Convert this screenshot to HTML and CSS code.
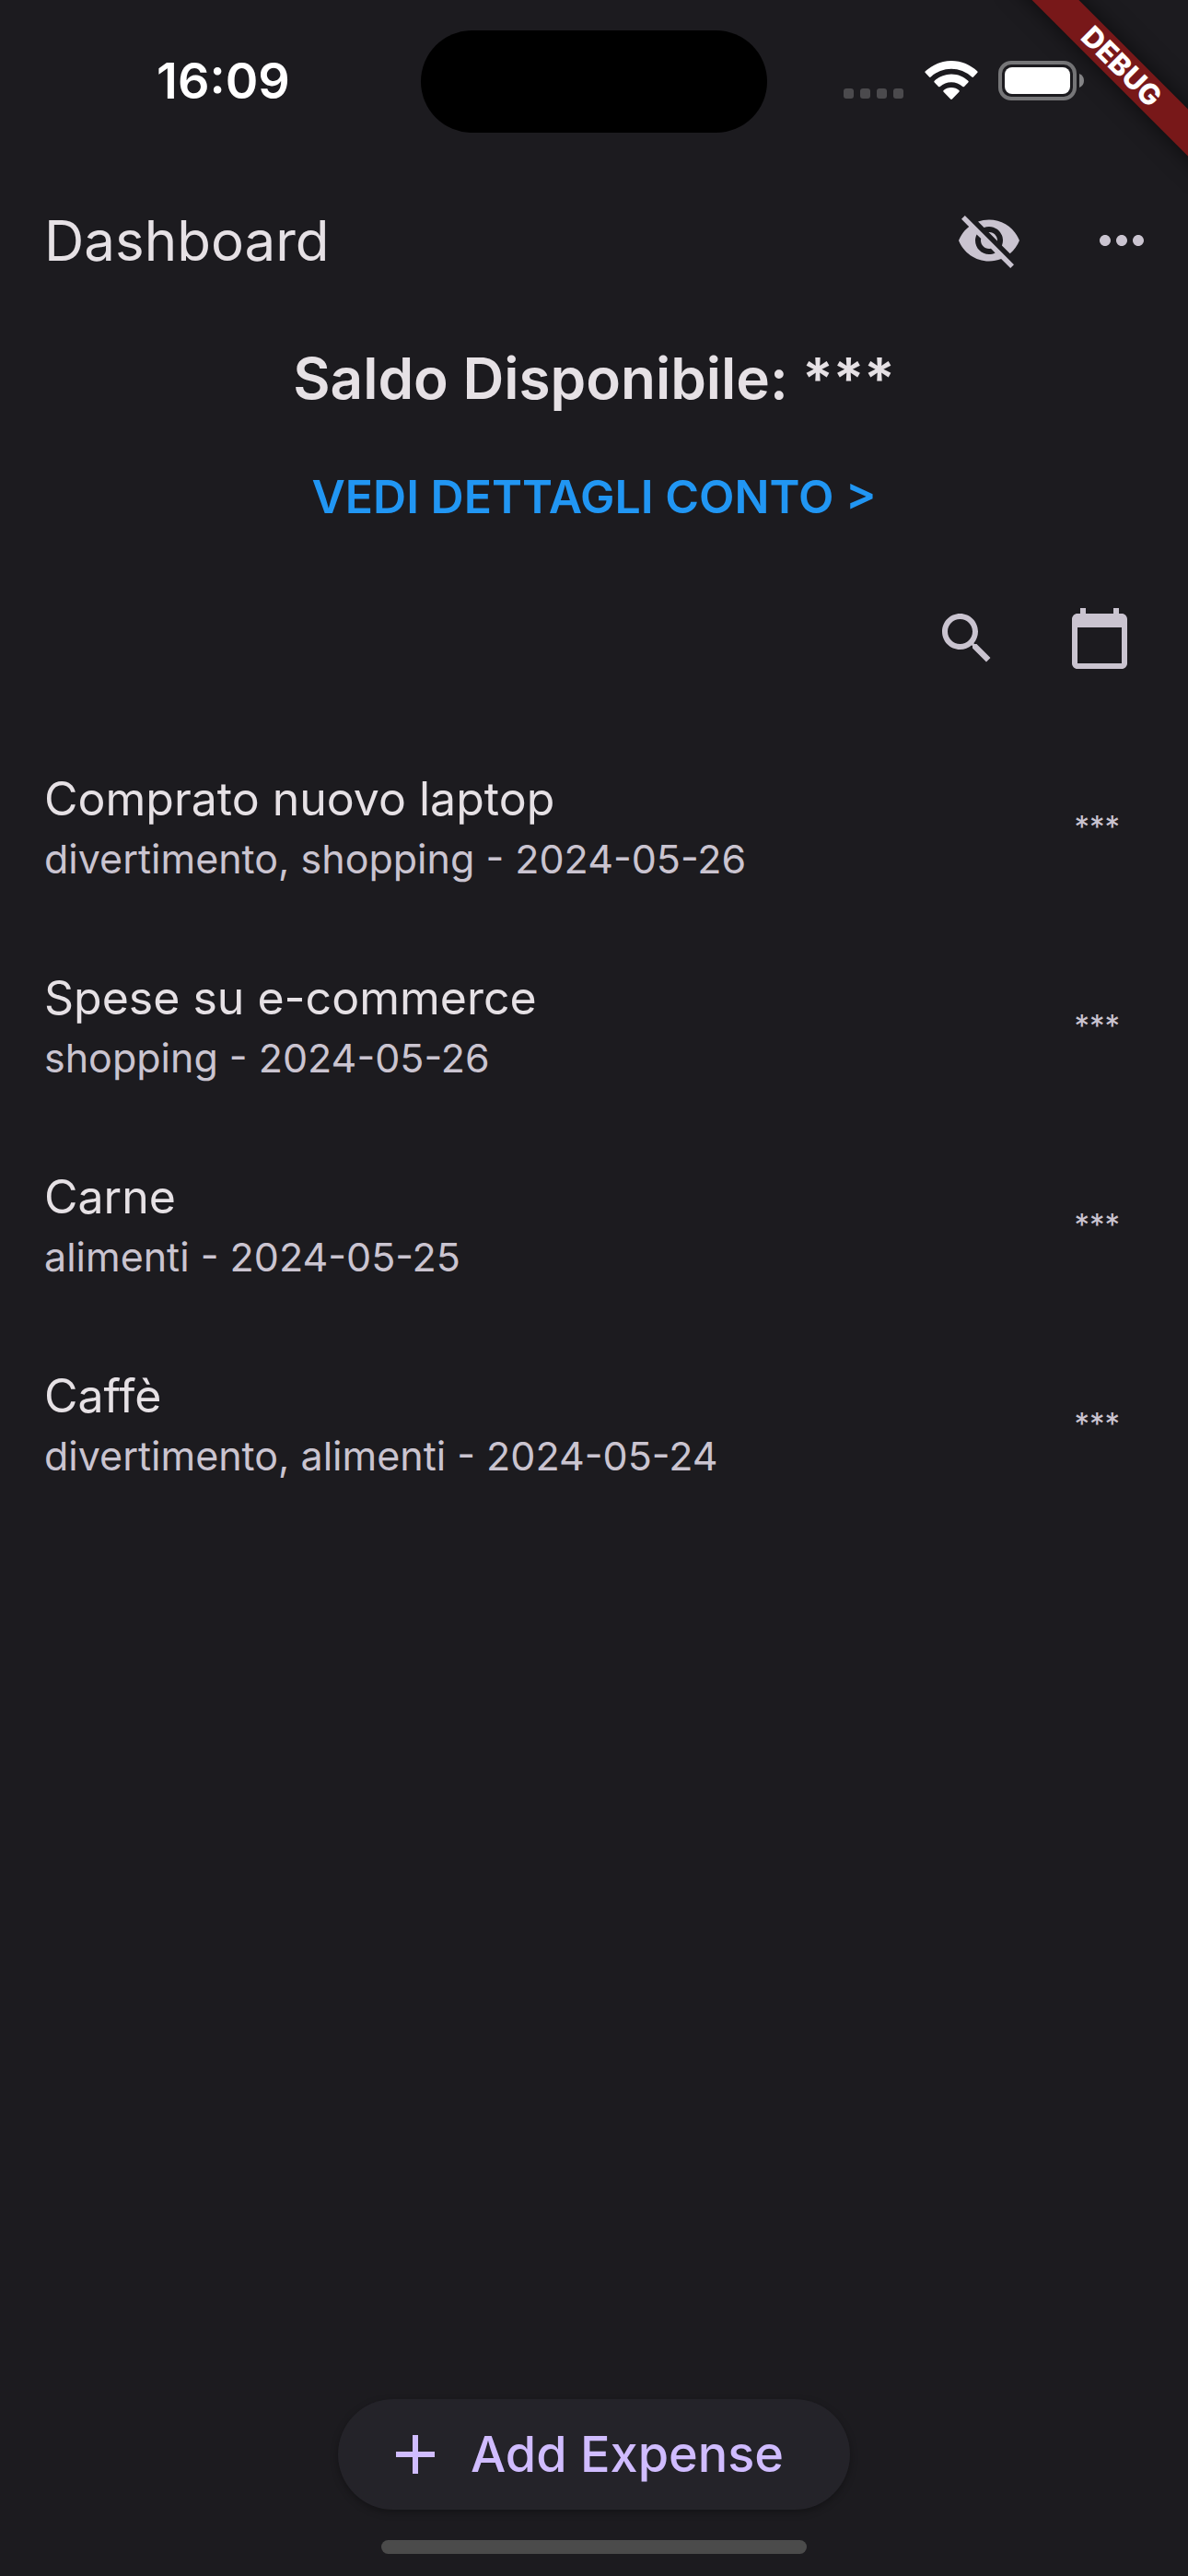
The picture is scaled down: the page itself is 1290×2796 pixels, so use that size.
FILE: index.html
```html
<!DOCTYPE html>
<html lang="it">
<head>
<meta charset="utf-8">
<meta name="viewport" content="width=device-width, initial-scale=1">
<title>Dashboard</title>
<link rel="stylesheet" href="styles.css">
</head>
<body>
<div class="screen">
  <div class="status-bar">
    <div class="status-side"><time class="clock">16:09</time></div>
    <div class="island"></div>
    <div class="status-side status-icons">
      <svg class="signal" viewBox="0 0 66 12" aria-hidden="true">
        <rect width="11" height="11" rx="3"/><rect x="18" width="11" height="11" rx="3"/><rect x="36" width="11" height="11" rx="3"/><rect x="54" width="11" height="11" rx="3"/>
      </svg>
      <svg class="wifi" viewBox="0 0 58 43" aria-hidden="true">
        <path d="M29 0C18 0 8 4.500 .8 11.300Q0 12.200 .8 13.100L5 17.500Q5.800 18.300 6.700 17.500A32.500 32.500 0 0 1 51.300 17.500Q52.200 18.300 53 17.500L57.200 13.100Q58 12.200 57.200 11.300C50 4.500 40 0 29 0Z"/>
        <path d="M29 14.500C21.800 14.500 15.500 17.300 10.700 21.700Q9.800 22.600 10.700 23.500L15 27.900Q15.800 28.700 16.700 27.900A18.500 18.500 0 0 1 41.300 27.900Q42.200 28.700 43 27.900L47.300 23.500Q48.200 22.600 47.300 21.700C42.500 17.300 36.200 14.500 29 14.500Z"/>
        <path d="M29 29C25.600 29 22.900 30.200 20.600 32Q19.700 32.900 20.600 33.800L28.100 41.500Q29 42.300 29.900 41.500L37.400 33.800Q38.300 32.900 37.400 32C35.100 30.200 32.400 29 29 29Z"/>
      </svg>
      <svg class="battery" viewBox="0 0 94 43" aria-hidden="true">
        <rect class="battery-case" x="2" y="2" width="81" height="39" rx="12"/>
        <rect class="battery-level" x="7" y="7" width="71" height="29" rx="8"/>
        <path class="battery-tip" d="M88 14Q93 16 93 21.500T88 29Z"/>
      </svg>
    </div>
  </div>

  <header class="app-bar">
    <h1 class="app-title">Dashboard</h1>
    <button class="icon-button" type="button" aria-label="Mostra importi">
      <svg class="icon" viewBox="0 0 24 24"><path d="M12 7c2.760 0 5 2.240 5 5 0 .65-.13 1.260-.36 1.830l2.920 2.920c1.510-1.260 2.700-2.890 3.430-4.750-1.730-4.390-6-7.500-11-7.500-1.400 0-2.740.25-3.980.7l2.160 2.160C10.740 7.130 11.350 7 12 7zM2 4.270l2.280 2.280.46.46C3.080 8.300 1.780 10.020 1 12c1.730 4.390 6 7.500 11 7.500 1.550 0 3.030-.3 4.380-.84l.42.42L19.730 22 21 20.730 3.270 3 2 4.270zM7.530 9.800l1.550 1.550c-.05.21-.08.43-.08.65 0 1.660 1.340 3 3 3 .22 0 .44-.03.65-.08l1.550 1.550c-.67.33-1.410.53-2.200.53-2.760 0-5-2.240-5-5 0-.79.2-1.530.53-2.200zm4.310-.78l3.150 3.150.02-.16c0-1.660-1.340-3-3-3l-.17.01z"/></svg>
    </button>
    <button class="icon-button" type="button" aria-label="Altro">
      <svg class="icon" viewBox="0 0 24 24"><path d="M6 10c-1.100 0-2 .9-2 2s.9 2 2 2 2-.9 2-2-.9-2-2-2zm12 0c-1.100 0-2 .9-2 2s.9 2 2 2 2-.9 2-2-.9-2-2-2zm-6 0c-1.100 0-2 .9-2 2s.9 2 2 2 2-.9 2-2-.9-2-2-2z"/></svg>
    </button>
  </header>

  <main class="content">
    <section class="summary">
      <h2 class="balance">Saldo Disponibile: ***</h2>
      <a class="details-link" href="#conto">VEDI DETTAGLI CONTO &gt;</a>
    </section>
    <div class="tools">
      <button class="icon-button" type="button" aria-label="Cerca">
        <svg class="icon" viewBox="0 0 24 24"><path d="M15.500 14h-.79l-.28-.27C15.410 12.590 16 11.110 16 9.500 16 5.910 13.090 3 9.500 3S3 5.910 3 9.500 5.910 16 9.500 16c1.610 0 3.090-.59 4.230-1.570l.27.28v.79l5 4.990L20.490 19l-4.990-5zm-6 0C7.010 14 5 11.990 5 9.500S7.010 5 9.500 5 14 7.010 14 9.500 11.990 14 9.500 14z"/></svg>
      </button>
      <button class="icon-button" type="button" aria-label="Calendario">
        <svg class="icon" viewBox="0 0 24 24"><path d="M20 3h-1V1h-2v2H7V1H5v2H4c-1.100 0-2 .9-2 2v16c0 1.100.9 2 2 2h16c1.100 0 2-.9 2-2V5c0-1.100-.9-2-2-2zm0 18H4V8h16v13z"/></svg>
      </button>
    </div>
    <ul class="expenses">
      <li class="expense">
        <div class="expense-text"><h3 class="expense-name">Comprato nuovo laptop</h3><p class="expense-meta">divertimento, shopping - 2024-05-26</p></div>
        <span class="amount">***</span>
      </li>
      <li class="expense">
        <div class="expense-text"><h3 class="expense-name">Spese su e-commerce</h3><p class="expense-meta">shopping - 2024-05-26</p></div>
        <span class="amount">***</span>
      </li>
      <li class="expense">
        <div class="expense-text"><h3 class="expense-name">Carne</h3><p class="expense-meta">alimenti - 2024-05-25</p></div>
        <span class="amount">***</span>
      </li>
      <li class="expense">
        <div class="expense-text"><h3 class="expense-name">Caffè</h3><p class="expense-meta">divertimento, alimenti - 2024-05-24</p></div>
        <span class="amount">***</span>
      </li>
    </ul>
  </main>

  <footer class="bottom">
    <button class="add-button" type="button">
      <svg class="icon" viewBox="0 0 24 24" aria-hidden="true"><path d="M19 13h-6v6h-2v-6H5v-2h6V5h2v6h6v2z"/></svg>
      Add Expense
    </button>
    <div class="home-indicator"></div>
  </footer>

  <div class="ribbon-corner"><div class="ribbon">DEBUG</div></div>
</div>
</body>
</html>
```
FILE: styles.css
```css
* {
  box-sizing: border-box;
  margin: 0;
  padding: 0;
}

body {
  background: #1c1b1f;
  color: #e6e1e5;
  font-family: Inter, "Liberation Sans", sans-serif;
}

.screen {
  position: relative;
  display: flex;
  flex-direction: column;
  min-height: 100vh;
}

.status-bar {
  display: grid;
  grid-template-columns: 1fr 376px 1fr;
  height: 177px;
  padding-top: 33px;
}

.status-side {
  display: flex;
  align-items: center;
  justify-content: center;
  height: 108px;
}

.clock {
  padding: 2px 0 0 28px;
  color: #fff;
  font-size: 54px;
  font-weight: 600;
  line-height: 64px;
}

.island {
  height: 111px;
  border-radius: 56px;
  background: #000;
}

.status-icons {
  justify-content: flex-end;
  gap: 22px;
  padding-right: 112px;
}

.signal {
  width: 66px;
  height: 12px;
  margin-top: 30px;
  fill: #4b4a4d;
}

.wifi {
  width: 58px;
  height: 43px;
  fill: #fff;
}

.battery {
  width: 94px;
  height: 43px;
}

.battery-case {
  fill: none;
  stroke: #767678;
  stroke-width: 4px;
}

.battery-level {
  fill: #fff;
}

.battery-tip {
  fill: #868688;
}

.app-bar {
  display: flex;
  align-items: center;
  height: 168px;
  padding-left: 48px;
}

.app-title {
  flex: 1;
  font-size: 60px;
  font-weight: 400;
  line-height: 84px;
}

.icon-button {
  width: 144px;
  height: 144px;
  padding: 36px;
  border: 0;
  background: none;
  color: #cac4d0;
}

.icon {
  display: block;
  flex: none;
  width: 72px;
  height: 72px;
  fill: currentColor;
}

.content {
  flex: 1;
}

.summary {
  display: flex;
  flex-direction: column;
  align-items: center;
  gap: 20px;
  padding: 30px 48px 10px;
}

.balance {
  font-size: 62px;
  font-weight: 600;
  line-height: 72px;
}

.details-link {
  color: #2196f3;
  font-size: 50px;
  font-weight: 600;
  line-height: 144px;
  text-decoration: none;
}

.tools {
  display: flex;
  justify-content: flex-end;
  padding: 0 24px 27px;
}

.expenses {
  list-style: none;
}

.expense {
  display: flex;
  align-items: center;
  justify-content: space-between;
  height: 216px;
  padding: 0 74px 6px 48px;
}

.expense-name {
  font-size: 50px;
  font-weight: 400;
  line-height: 70px;
}

.expense-meta {
  color: #cac4d0;
  font-size: 43px;
  line-height: 60px;
}

.amount {
  color: #cac4d0;
  font-size: 33px;
  line-height: 48px;
}

.bottom {
  display: flex;
  flex-direction: column;
  align-items: center;
  gap: 33px;
  padding-bottom: 24px;
}

.add-button {
  display: flex;
  align-items: center;
  gap: 24px;
  height: 120px;
  padding: 0 72px 0 48px;
  border: 0;
  border-radius: 60px;
  background: #242329;
  box-shadow: 0 3px 9px rgba(0, 0, 0, 0.3);
  color: #d0bcff;
  font-family: inherit;
  font-size: 54px;
  font-weight: 500;
  line-height: 72px;
}

.home-indicator {
  width: 462px;
  height: 15px;
  border-radius: 8px;
  background: #4b4b4b;
}

/* Diagonal ribbon over the top right corner */
.ribbon-corner {
  position: absolute;
  top: 0;
  right: 0;
  width: 240px;
  height: 240px;
  overflow: hidden;
  pointer-events: none;
}

.ribbon {
  position: absolute;
  top: 54px;
  right: -78px;
  width: 300px;
  height: 36px;
  background: #781819;
  box-shadow: 0 0 24px rgba(0, 0, 0, 0.6);
  color: #fff;
  font-size: 31px;
  font-weight: 800;
  line-height: 36px;
  text-align: center;
  transform: rotate(45deg);
}
```
